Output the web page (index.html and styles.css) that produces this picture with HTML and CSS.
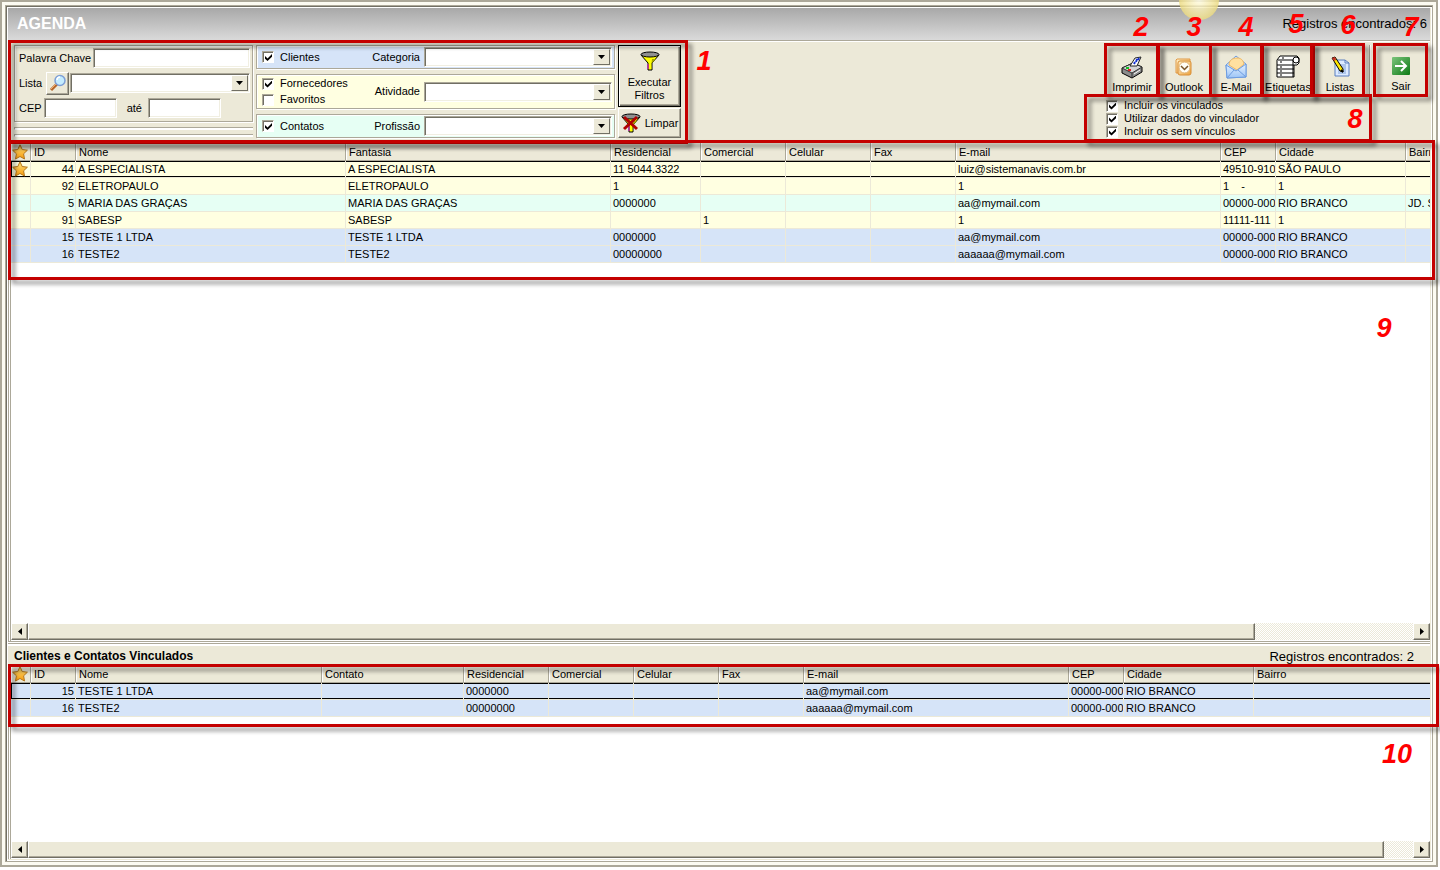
FILE: index.html
```html
<!DOCTYPE html>
<html lang="pt-BR">
<head>
<meta charset="utf-8">
<title>Agenda</title>
<link rel="stylesheet" href="styles.css">
</head>
<body>
<svg class="defs" aria-hidden="true">
  <defs>
    <linearGradient id="gold" x1="0" y1="0" x2="0" y2="1"><stop offset="0" stop-color="#ffe27a"/><stop offset="1" stop-color="#f59a0c"/></linearGradient>
    <linearGradient id="env" x1="0" y1="0" x2="0" y2="1"><stop offset="0" stop-color="#e4f1ff"/><stop offset="1" stop-color="#9cc4f6"/></linearGradient>
    <linearGradient id="green" x1="0" y1="0" x2="1" y2="1"><stop offset="0" stop-color="#7cc47c"/><stop offset="1" stop-color="#0c7a14"/></linearGradient>
    <linearGradient id="orange" x1="0" y1="0" x2="1" y2="1"><stop offset="0" stop-color="#fff0c8"/><stop offset="1" stop-color="#eda23c"/></linearGradient>
  </defs>
  <symbol id="star" viewBox="0 0 16 16"><path d="M8 .8l2.200 4.700 5.200.7-3.800 3.600.9 5.200L8 12.500 3.500 15l.9-5.200L.6 6.200l5.200-.7z" fill="url(#gold)" stroke="#b5761b"/></symbol>
  <symbol id="funnel" viewBox="0 0 20 20"><path d="M1 4l7 8v7h4v-7l7-8z" fill="#ffff00" stroke="#000"/><path d="M12 8h4l-4 4v6h-1z" fill="#a8a800"/><path d="M8 13v5" stroke="#e000e0"/><ellipse cx="10" cy="3.500" rx="9" ry="2.500" fill="#909090" stroke="#000"/></symbol>
  <symbol id="arrow-down" viewBox="0 0 7 4"><path d="M0 0h7L3.500 4z"/></symbol>
</svg>
<main class="window">
<div class="window-inner">
  <header class="title-bar">
    <h1>AGENDA</h1>
    <span class="sun"></span>
    <span class="count">Registros encontrados: 6</span>
  </header>

  <section class="toolbar">
    <div class="search-column">
      <div class="search-box">
        <div class="field"><label for="key">Palavra Chave</label><input class="text grow" id="key" type="text"></div>
        <div class="field"><label for="list">Lista</label>
          <button class="raised lookup" type="button" aria-label="Pesquisar lista"><svg viewBox="0 0 18 18"><path d="M2 16l6-6" stroke="#b5652a" stroke-width="3"/><path d="M2 15l5-5" stroke="#f2b070" stroke-width="1"/><circle cx="11" cy="6.500" r="5" fill="#c4ecff" stroke="#7d9fd6" stroke-width="1.500"/><path d="M8 6a3 3 0 013-3" stroke="#fff" stroke-width="1.500" fill="none"/></svg></button>
          <span class="combo grow"><select id="list"><option></option></select><svg><use href="#arrow-down"/></svg></span></div>
        <div class="field"><label for="cep1">CEP</label><input class="text zip" id="cep1" type="text"><label class="until" for="cep2">até</label><input class="text zip" id="cep2" type="text"></div>
      </div>
      <div class="groove"></div><div class="groove"></div>
    </div>

    <div class="kind-column">
      <div class="kind blue">
        <div class="checks"><label><input type="checkbox" checked>Clientes</label></div>
        <label for="cat">Categoria</label><span class="combo"><select id="cat"><option></option></select><svg><use href="#arrow-down"/></svg></span>
      </div>
      <div class="kind yellow">
        <div class="checks"><label><input type="checkbox" checked>Fornecedores</label><label><input type="checkbox">Favoritos</label></div>
        <label for="act">Atividade</label><span class="combo"><select id="act"><option></option></select><svg><use href="#arrow-down"/></svg></span>
      </div>
      <div class="kind mint">
        <div class="checks"><label><input type="checkbox" checked>Contatos</label></div>
        <label for="prof">Profissão</label><span class="combo"><select id="prof"><option></option></select><svg><use href="#arrow-down"/></svg></span>
      </div>
    </div>

    <div class="run-column">
      <button class="raised run" type="button"><svg><use href="#funnel"/></svg>Executar<br>Filtros</button>
      <button class="raised clear" type="button"><svg viewBox="0 0 20 20"><use href="#funnel" width="20" height="20"/><path d="M3 4l13 12M16 4L3 16" stroke="#b00000" stroke-width="3"/></svg>Limpar</button>
    </div>

    <div class="actions">
      <div class="action-row">
        <button type="button"><svg viewBox="0 0 24 24"><path d="M2 13l11-5 9 4v5l-10 6L2 18z" fill="#8c8c8c" stroke="#000"/><path d="M2 13l11-5 9 4-10 6z" fill="#d4d4d4" stroke="#333"/><path d="M10 11l5-8 6-1-4 9z" fill="#fff" stroke="#222"/><path d="M14 9l1-2M16 7l1-3M18 5l1-2" stroke="#1230d0" stroke-width="2"/><path d="M12 18v4" stroke="#333"/><path d="M6 13h3" stroke="#10c020" stroke-width="2"/><path d="M8 15h3" stroke="#e02020" stroke-width="2"/><path d="M14 19l6-4" stroke="#fff"/></svg>Imprimir</button>
        <button type="button"><svg viewBox="0 0 24 24"><path d="M5 4h13v3H8v11H4V5z" fill="url(#orange)" stroke="#e09a48"/><rect x="6" y="6" width="13" height="14" rx="2" fill="url(#orange)" stroke="#d98e36"/><circle cx="12.500" cy="12.500" r="5.500" fill="#fffdf5" stroke="#e0b070"/><path d="M9 11l3.500 3.500L16 11" fill="none" stroke="#7a5428" stroke-width="1.500"/></svg>Outlook</button>
        <button type="button"><svg viewBox="0 0 24 24"><path d="M2 10L12 1l10 8v13L3 23z" fill="url(#env)" stroke="#6d9ce0"/><path d="M5 10c0-5 4-7 8-7s6 2 7 6l-7 6z" fill="#ffe0a0" stroke="#f0b860"/><path d="M2 10l10 6 10-7v13L3 23z" fill="url(#env)" stroke="#6d9ce0"/><path d="M3 23l7-8M22 22l-8-7" stroke="#6d9ce0"/></svg>E-Mail</button>
        <button type="button"><svg viewBox="0 0 24 24"><path d="M4 1h17l2 2v5l-2 2h-3v12H1V5z" fill="#fff" stroke="#000"/><path d="M2 5h15M1 10h17M1 14h17M1 18h17M17 5v17" stroke="#000"/><circle cx="20" cy="5" r="3" fill="#fff" stroke="#000"/><path d="M4 7h2M4 12h2M4 16h2M4 20h2M6 3h2" stroke="#000"/></svg>Etiquetas</button>
        <button type="button"><svg viewBox="0 0 24 24"><path d="M7 5h10l4 3v13H7z" fill="#dceaff" stroke="#5b7fc0"/><path d="M17 5v3h4" fill="none" stroke="#5b7fc0"/><path d="M10 10h8M10 12h8M10 14h8M10 16h8M10 18h8" stroke="#7fa0d8"/><path d="M4 3l3-1 8 12v3l-3-1z" fill="#ffe600" stroke="#000"/><path d="M4 3l3-1 1 3-2 1z" fill="#c83228"/><path d="M13 15l2 2" stroke="#000" stroke-width="2"/></svg>Listas</button>
      </div>
      <div class="options">
        <label><input type="checkbox" checked>Incluir os vinculados</label>
        <label><input type="checkbox" checked>Utilizar dados do vinculador</label>
        <label><input type="checkbox" checked>Incluir os sem vínculos</label>
      </div>
    </div>
    <div class="exit">
      <button type="button"><svg viewBox="0 0 24 24"><rect x="3" y="3" width="18" height="18" rx="1" fill="url(#green)"/><path d="M6 12h11M12 7l5 5-5 5" fill="none" stroke="#fff" stroke-width="2"/></svg>Sair</button>
    </div>

    <i class="frame f1"></i><i class="frame act f2"></i><i class="frame act f3"></i><i class="frame act f4"></i><i class="frame act f5"></i><i class="frame act f6"></i><i class="frame act f7"></i><i class="frame f8"></i>
    <b class="num n1">1</b><b class="num n2">2</b><b class="num n3">3</b><b class="num n4">4</b><b class="num n5">5</b><b class="num n6">6</b><b class="num n7">7</b><b class="num n8">8</b>
  </section>

  <section class="grid main-grid">
    <div class="rows">
      <table>
        <colgroup><col class="c-star"><col class="c-id"><col class="c-name"><col class="c-wide"><col class="c-res"><col class="c-tel"><col class="c-tel"><col class="c-tel"><col class="c-wide"><col class="c-cep"><col class="c-city"><col class="c-last"></colgroup>
        <thead><tr><th><svg class="star"><use href="#star"/></svg></th><th>ID</th><th>Nome</th><th>Fantasia</th><th>Residencial</th><th>Comercial</th><th>Celular</th><th>Fax</th><th>E-mail</th><th>CEP</th><th>Cidade</th><th>Bairro</th></tr></thead>
        <tbody>
          <tr class="yellow current"><td><svg class="star"><use href="#star"/></svg></td><td>44</td><td>A ESPECIALISTA</td><td>A ESPECIALISTA</td><td>11 5044.3322</td><td></td><td></td><td></td><td>luiz@sistemanavis.com.br</td><td>49510-910</td><td>SÃO PAULO</td><td></td></tr>
          <tr class="yellow"><td></td><td>92</td><td>ELETROPAULO</td><td>ELETROPAULO</td><td>1</td><td></td><td></td><td></td><td>1</td><td>1    -</td><td>1</td><td></td></tr>
          <tr class="mint"><td></td><td>5</td><td>MARIA DAS GRAÇAS</td><td>MARIA DAS GRAÇAS</td><td>0000000</td><td></td><td></td><td></td><td>aa@mymail.com</td><td>00000-000</td><td>RIO BRANCO</td><td>JD. S</td></tr>
          <tr class="yellow"><td></td><td>91</td><td>SABESP</td><td>SABESP</td><td></td><td>1</td><td></td><td></td><td>1</td><td>11111-111</td><td>1</td><td></td></tr>
          <tr class="blue"><td></td><td>15</td><td>TESTE 1 LTDA</td><td>TESTE 1 LTDA</td><td>0000000</td><td></td><td></td><td></td><td>aa@mymail.com</td><td>00000-000</td><td>RIO BRANCO</td><td></td></tr>
          <tr class="blue"><td></td><td>16</td><td>TESTE2</td><td>TESTE2</td><td>00000000</td><td></td><td></td><td></td><td>aaaaaa@mymail.com</td><td>00000-000</td><td>RIO BRANCO</td><td></td></tr>
        </tbody>
      </table>
    </div>
    <div class="scroll"><button class="raised" type="button" aria-label="Rolar para a esquerda"><svg viewBox="0 0 4 7"><path d="M4 0v7L0 3.500z"/></svg></button><div class="track"><div class="raised thumb" style="width:88.6%"></div></div><button class="raised" type="button" aria-label="Rolar para a direita"><svg viewBox="0 0 4 7"><path d="M0 0v7l4-3.500z"/></svg></button></div>
    <i class="frame f9"></i><b class="num n9">9</b>
  </section>

  <div class="splitter"></div>
  <div class="linked-title"><h2>Clientes e Contatos Vinculados</h2><span class="count">Registros encontrados: 2</span></div>

  <section class="grid linked-grid">
    <div class="rows">
      <table>
        <colgroup><col class="c-star"><col class="c-id"><col class="c-name2"><col class="c-contact"><col class="c-tel"><col class="c-tel"><col class="c-tel"><col class="c-tel"><col class="c-wide"><col class="c-cep"><col class="c-city"><col class="c-rest"></colgroup>
        <thead><tr><th><svg class="star"><use href="#star"/></svg></th><th>ID</th><th>Nome</th><th>Contato</th><th>Residencial</th><th>Comercial</th><th>Celular</th><th>Fax</th><th>E-mail</th><th>CEP</th><th>Cidade</th><th>Bairro</th></tr></thead>
        <tbody>
          <tr class="blue current"><td></td><td>15</td><td>TESTE 1 LTDA</td><td></td><td>0000000</td><td></td><td></td><td></td><td>aa@mymail.com</td><td>00000-000</td><td>RIO BRANCO</td><td></td></tr>
          <tr class="blue"><td></td><td>16</td><td>TESTE2</td><td></td><td>00000000</td><td></td><td></td><td></td><td>aaaaaa@mymail.com</td><td>00000-000</td><td>RIO BRANCO</td><td></td></tr>
        </tbody>
      </table>
    </div>
    <div class="scroll"><button class="raised" type="button" aria-label="Rolar para a esquerda"><svg viewBox="0 0 4 7"><path d="M4 0v7L0 3.500z"/></svg></button><div class="track"><div class="raised thumb" style="width:97.9%"></div></div><button class="raised" type="button" aria-label="Rolar para a direita"><svg viewBox="0 0 4 7"><path d="M0 0v7l4-3.500z"/></svg></button></div>
    <i class="frame f10"></i><b class="num n10">10</b>
  </section>
</div>
</main>
</body>
</html>
```
FILE: styles.css
```css
* { box-sizing: border-box; }
:root {
  --face: #ece9d8;
  --shade: #aca899;
  --dark: #716f64;
  --red: #c40000;
}
body {
  margin: 0;
  background: #fff;
  color: #000;
  font: 11px/13px "Liberation Sans", Arial, sans-serif;
}
.defs { position: absolute; width: 0; height: 0; }
button, input, select { font: inherit; color: inherit; margin: 0; }
h1, h2 { margin: 0; }

.window {
  display: flex;
  min-height: calc(100vh - 3px);
  margin: 0 2px 3px 0;
  padding: 3px;
  border: 2px solid var(--shade);
  background: #fcfbf2;
}
.window-inner {
  flex: 1;
  min-width: 0;
  display: flex;
  flex-direction: column;
  padding: 2px;
  border: 1px solid var(--shade);
  background: var(--face);
  box-shadow: inset 1px 1px var(--dark), inset -1px -1px #fff, inset 2px 2px #fff;
}

.title-bar {
  position: relative;
  display: flex;
  align-items: center;
  justify-content: space-between;
  height: 32px;
  padding: 0 3px 0 9px;
  background: linear-gradient(#a8a8a8, #dadada);
}
.title-bar h1 { color: #fff; font-size: 16px; line-height: 20px; }
.count { font-size: 13px; line-height: 16px; }
.sun {
  position: absolute;
  top: -8px;
  right: 211px;
  width: 40px;
  height: 20px;
  border-radius: 0 0 20px 20px;
  background: radial-gradient(circle at 50% 0, #fffde8, #f3e6a0 50%, #dfc95c);
  opacity: .85;
}

/* Toolbar */
.toolbar {
  position: relative;
  display: flex;
  gap: 3px;
  padding: 4px 3px 4px 6px;
  height: 103px;
  border-top: 1px solid var(--shade);
  box-shadow: inset 0 1px #fff;
}
.search-column { display: flex; flex-direction: column; gap: 5px; width: 239px; }
.search-box {
  display: flex;
  flex-direction: column;
  gap: 3px;
  height: 77px;
  padding: 1px 2px 0 4px;
  border: 1px solid var(--shade);
  box-shadow: inset 1px 1px #fff, 1px 1px #fff;
}
.field { display: flex; align-items: center; height: 22px; }
.field label { white-space: nowrap; }
.field label:first-child { margin-right: 2px; }
.field .until { margin: 0 6px 0 10px; }
.text, .combo {
  height: 20px;
  border: 1px solid;
  border-color: var(--shade) #fff #fff var(--shade);
  background: #fff;
  box-shadow: inset 1px 1px var(--dark), inset -1px -1px #f1efe2;
}
.text { padding: 0 3px; min-width: 0; border-radius: 0; }
.grow { flex: 1; }
.zip { width: 73px; }
.groove { height: 3px; border: 1px solid var(--shade); border-right: 0; border-bottom-color: #fff; background: #fff; margin-bottom: -1px; }
.raised {
  border: 1px solid;
  border-color: #fff var(--dark) var(--dark) #fff;
  background: var(--face);
  box-shadow: inset -1px -1px var(--shade);
  padding: 0;
  border-radius: 0;
}
.lookup { width: 23px; height: 23px; margin: 0 1px 0 2px; }
.lookup svg { display: block; width: 18px; height: 18px; margin: 0 auto; }
.combo { display: block; position: relative; }
.combo select {
  appearance: none;
  display: block;
  width: 100%;
  height: 100%;
  padding: 0 20px 0 4px;
  border: 0;
  background: transparent;
}
.combo svg {
  position: absolute;
  top: 1px;
  right: 1px;
  width: 17px;
  height: 16px;
  padding: 5px 4px;
  border: 1px solid;
  border-color: #fff var(--dark) var(--dark) #fff;
  background: var(--face);
  pointer-events: none;
}

.kind-column { display: flex; flex-direction: column; gap: 5px; width: 359px; }
.kind {
  display: flex;
  align-items: center;
  height: 24px;
  padding: 0 2px 0 5px;
  border: 1px solid var(--shade);
  box-shadow: inset 1px 1px #fff, 1px 1px #fff;
}
.kind.yellow { height: 35px; }
.blue { background: #d6e4f8; }
.yellow { background: #ffffe1; }
.mint { background: #e6fff4; }
.kind .checks { flex: 1; display: flex; flex-direction: column; gap: 3px; }
.kind .combo { width: 188px; margin-left: 4px; }
.checks label, .options label { display: flex; align-items: center; gap: 6px; }
input[type="checkbox"] {
  appearance: none;
  width: 12px;
  height: 12px;
  background: #fff;
  border: 1px solid;
  border-color: var(--shade) #fff #fff var(--shade);
  box-shadow: inset 1px 1px var(--dark);
}
input[type="checkbox"]:checked::before {
  content: "";
  display: block;
  width: 7px;
  height: 7px;
  margin: 2px;
  background: #000;
  clip-path: polygon(0 28%, 36% 64%, 100% 0, 100% 40%, 36% 100%, 0 68%);
}

.run-column { display: flex; flex-direction: column; gap: 1px; width: 63px; }
.run { height: 62px; border: 1px solid #000; box-shadow: inset 1px 1px #fff, inset -1px -1px var(--dark), inset -2px -2px var(--shade); }
.run svg { display: block; width: 20px; height: 20px; margin: 0 auto 5px; }
.clear { display: flex; align-items: center; justify-content: center; gap: 4px; height: 30px; }
.clear svg { width: 20px; height: 20px; }

.actions { margin-left: auto; }
.action-row { display: flex; }
.action-row button, .exit button {
  width: 52px;
  height: 52px;
  padding: 6px 0 0;
  border: 0;
  background: transparent;
  white-space: nowrap;
}
.action-row svg, .exit svg { display: block; width: 24px; height: 24px; margin: 0 auto 2px; }
.exit button { padding-top: 4px; }
.options { padding-top: 2px; }
.options label { height: 13px; }
.exit { padding-left: 6px; background: linear-gradient(90deg, var(--shade) 1px, #fff 1px 2px, transparent 2px 4px, var(--shade) 4px 5px, transparent 5px) 0 0 / 100% 50px no-repeat; }

/* Data grids */
.grid {
  position: relative;
  min-height: 0;
  display: flex;
  flex-direction: column;
  border-left: 3px double var(--shade);
  background: #fff;
}
.main-grid { flex: 249 0 0; }
.linked-grid { flex: 97 0 0; }
.rows { flex: 1; overflow: hidden; }
table { table-layout: fixed; width: 100%; border-collapse: separate; border-spacing: 0; }
.c-star { width: 20px; }
.c-id { width: 45px; }
.c-name { width: 270px; }
.c-name2 { width: 246px; }
.c-contact { width: 142px; }
.c-wide { width: 265px; }
.c-res { width: 90px; }
.c-tel { width: 85px; }
.c-cep { width: 55px; }
.c-city { width: 130px; }
th, td { height: 17px; padding: 0 0 0 2px; overflow: hidden; white-space: pre; text-align: left; line-height: 13px; }
th {
  height: 18px;
  padding: 2px 0 0 3px;
  font-weight: normal;
  background: var(--face);
  border-right: 1px solid var(--shade);
  border-bottom: 1px solid var(--shade);
  box-shadow: inset 1px 0 #fff;
}
td { border-right: 1px solid var(--face); border-bottom: 1px solid var(--face); }
td:nth-child(2) { text-align: right; padding-right: 1px; }
th:first-child, td:first-child { padding: 0 0 0 1px; }
th:last-child, td:last-child { border-right: 0; }
.current td { box-shadow: inset 0 1px #000, inset 0 -1px #000; }
.current td:first-child { box-shadow: inset 1px 1px #000, inset 0 -1px #000; }
.star { display: block; width: 16px; height: 16px; }

.scroll { display: flex; height: 17px; margin-bottom: 1px; }
.scroll button { width: 17px; }
.scroll button svg { display: block; width: 4px; height: 7px; margin: 0 auto; }
.track { flex: 1; background: repeating-conic-gradient(#fff 0 25%, var(--face) 0 50%) 0 0 / 2px 2px; }
.thumb { height: 100%; }

.splitter { height: 5px; border-top: 1px solid var(--shade); border-bottom: 1px solid #fff; background: linear-gradient(#fff 1px, var(--shade) 1px 2px, #fff 2px); }
.linked-title { display: flex; align-items: center; justify-content: space-between; height: 19px; padding: 2px 16px 0 6px; }
.linked-title h2 { font-size: 12px; line-height: 13px; }

/* Numbered callouts */
.frame {
  position: absolute;
  z-index: 2;
  border: 3px solid var(--red);
  filter: drop-shadow(4px 4px 2px rgba(0, 0, 0, .45));
  pointer-events: none;
}
.f1 { left: 0; top: -1px; width: 680px; height: 104px; }
.act { top: 2px; width: 55px; height: 54px; }
.f2 { right: 271px; }
.f3 { right: 218px; }
.f4 { right: 166px; }
.f5 { right: 115px; }
.f6 { right: 65px; }
.f7 { right: 2px; }
.f8 { right: 58px; top: 53px; width: 288px; height: 48px; }
.f9 { left: -3px; right: -5px; top: -3px; height: 140px; }
.f10 { left: -3px; right: -9px; top: -1px; height: 63px; }
.num {
  position: absolute;
  z-index: 3;
  width: 30px;
  color: #f00;
  font-size: 27px;
  line-height: 28px;
  font-style: italic;
  text-align: center;
}
.n1 { left: 681px; top: 6px; }
.n2 { right: 274px; top: -28px; }
.n3 { right: 221px; top: -28px; }
.n4 { right: 169px; top: -28px; }
.n5 { right: 119px; top: -31px; }
.n6 { right: 67px; top: -30px; }
.n7 { right: 4px; top: -28px; }
.n8 { right: 60px; top: 64px; }
.n9 { right: 31px; top: 171px; }
.n10 { right: 18px; top: 75px; }
```
